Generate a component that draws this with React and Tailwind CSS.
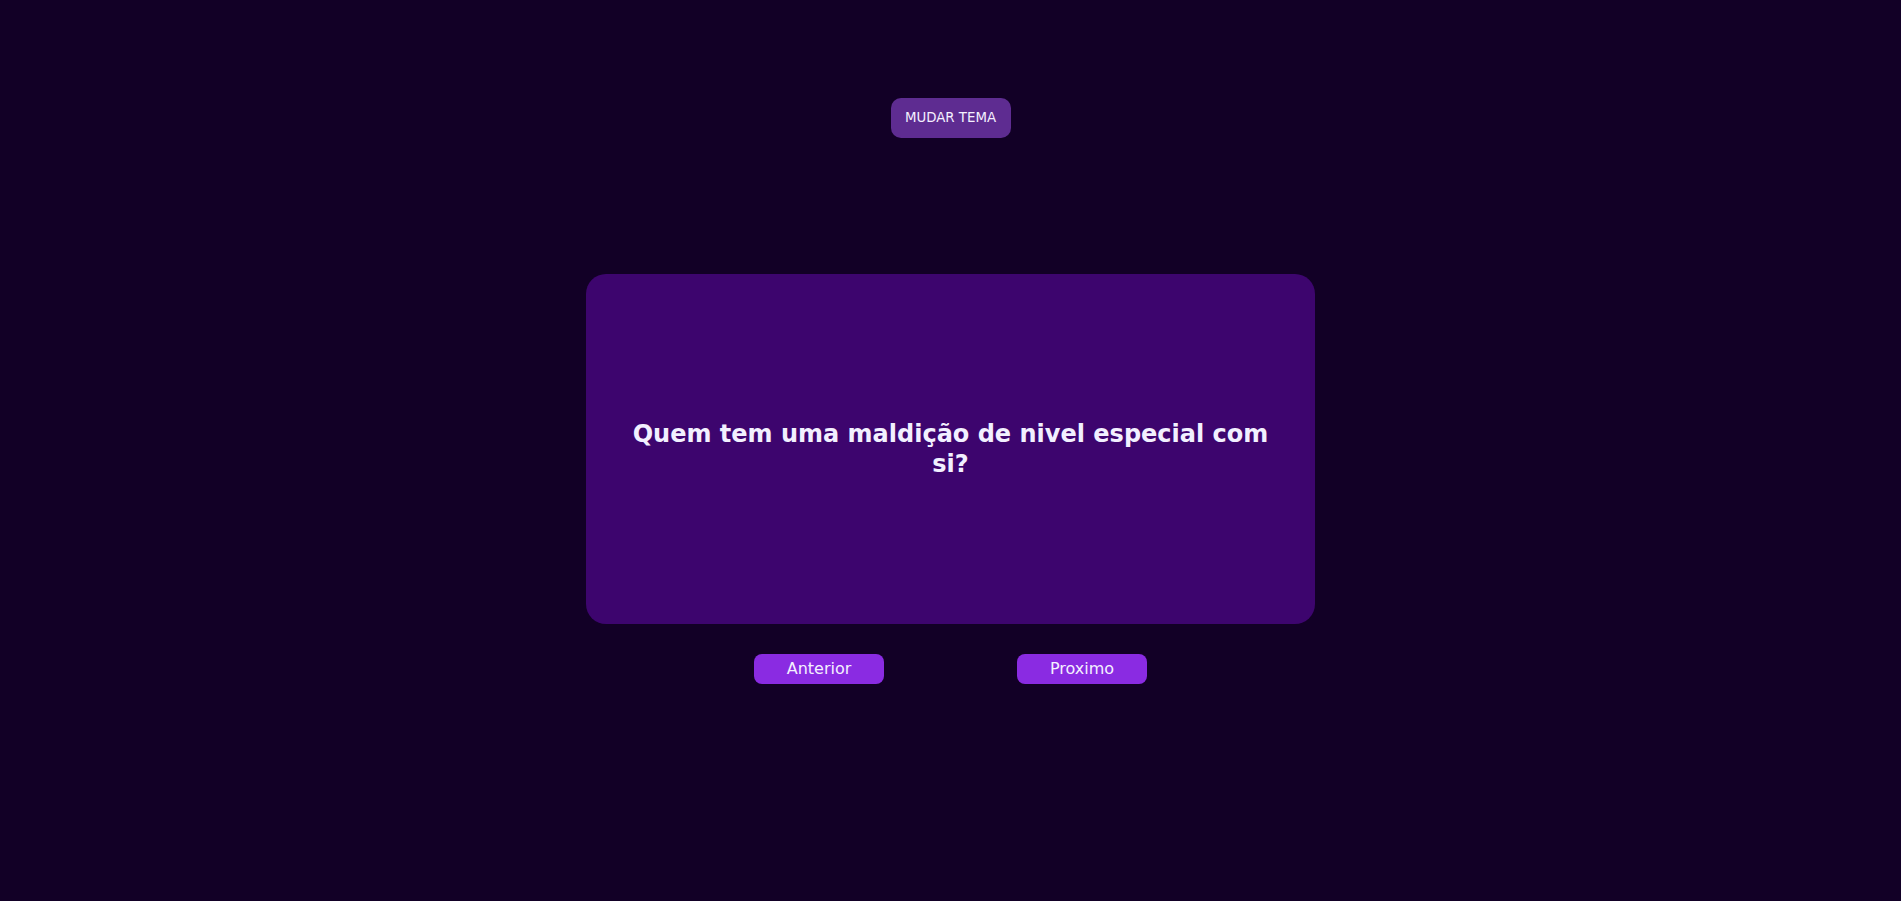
export default function App() {
  return (
    <div
      className="min-h-[901px] w-full bg-[#120026] flex flex-col items-center pt-[98px]"
      style={{ fontFamily: '"DejaVu Sans", Verdana, sans-serif' }}
    >
      <button className="w-[120px] h-[40px] rounded-[10px] bg-[#5e2c91] text-[13.333px] text-[#f4f0ff] leading-none">
        MUDAR TEMA
      </button>
      <div className="mt-[136px] w-[729px] h-[350px] rounded-[20px] bg-[#3d056e] flex items-center justify-center px-[32px]">
        <h2 className="text-[24px] font-bold text-center text-[#f2f0ff] leading-[30px]">
          Quem tem uma maldição de nivel especial com si?
        </h2>
      </div>
      <div className="mt-[30px] flex gap-[133px]">
        <button className="w-[130px] h-[30px] rounded-[8px] bg-[#8a2be2] text-[16px] text-[#f4f0ff] leading-none">
          Anterior
        </button>
        <button className="w-[130px] h-[30px] rounded-[8px] bg-[#8a2be2] text-[16px] text-[#f4f0ff] leading-none">
          Proximo
        </button>
      </div>
    </div>
  );
}
